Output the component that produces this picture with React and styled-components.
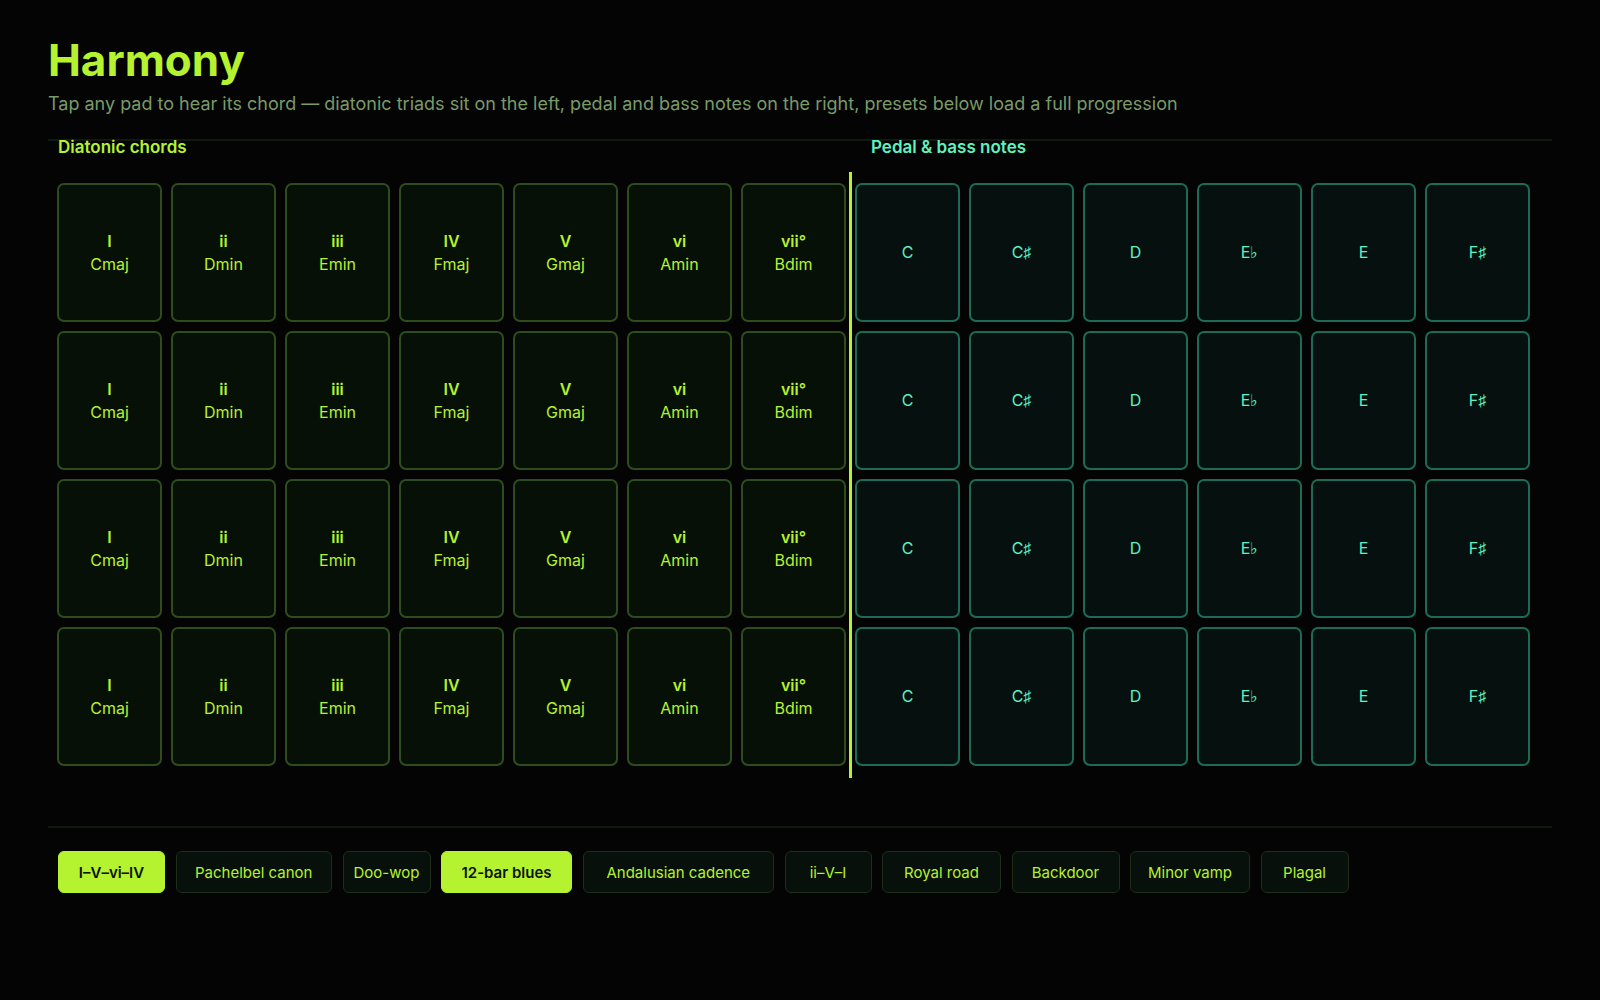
import React from "react";
import styled, { createGlobalStyle } from "styled-components";

const GlobalStyle = createGlobalStyle`
  * { box-sizing: border-box; }
  body {
    margin: 0;
    background: #030403;
    font-family: "Inter", "Noto Sans", sans-serif;
  }
`;

const Page = styled.main`
  width: 1600px;
  min-height: 1000px;
  padding: 36px 48px 0;
`;

const Header = styled.header`
  display: flex;
  flex-direction: column;
  gap: 8px;
  padding-bottom: 23px;
  border-bottom: 2px solid #0d1a0c;
`;

const Title = styled.h1`
  margin: 0;
  font-size: 44px;
  line-height: 48px;
  font-weight: 700;
  color: #b5f22f;
`;

const Subtitle = styled.p`
  margin: 0;
  font-size: 18px;
  line-height: 24px;
  color: #7a9a68;
  white-space: nowrap;
  overflow: hidden;
`;

const Labels = styled.div`
  display: flex;
  margin-top: -6px;
  padding-left: 10px;
`;

const SectionLabel = styled.h2`
  margin: 0;
  width: ${({ $w }) => ($w ? `${$w}px` : "auto")};
  padding-left: ${({ $pad }) => $pad || 0}px;
  font-size: 17px;
  line-height: 24px;
  font-weight: 600;
  color: ${({ $accent }) => $accent};
`;

const Board = styled.section`
  display: flex;
  gap: 3px;
  margin-top: 13px;
  padding-left: 9px;
`;

const Grid = styled.div`
  display: grid;
  grid-template-columns: repeat(${({ $cols }) => $cols}, 105px);
  grid-auto-rows: 139px;
  gap: 9px;
  padding: 11px 0 12px;
`;

const Divider = styled.div`
  width: 3px;
  background: #b5f22f;
`;

const Pad = styled.button`
  display: flex;
  flex-direction: column;
  align-items: center;
  justify-content: center;
  padding: 0 7px;
  overflow: hidden;
  border-radius: 7px;
  border: 2px solid ${({ $tone }) => ($tone === "lime" ? "#2e4c1d" : "#1d6a56")};
  background: ${({ $tone }) => ($tone === "lime" ? "#071007" : "#06110f")};
  color: ${({ $tone }) => ($tone === "lime" ? "#b5f22f" : "#5cf2c2")};
  font-family: inherit;
  font-size: 16px;
  line-height: 23px;
  cursor: pointer;
`;

const PadLine = styled.span`
  white-space: nowrap;
  font-weight: ${({ $strong }) => ($strong ? 600 : 400)};
`;

const Footer = styled.footer`
  margin-top: 48px;
  padding: 23px 0 0 10px;
  border-top: 2px solid #0d1a0c;
`;

const Tabs = styled.nav`
  display: flex;
  gap: 10.5px;
`;

const Tab = styled.button`
  width: ${({ $w }) => $w}px;
  height: 42px;
  padding: 0;
  border-radius: 6px;
  border: 1px solid ${({ $active }) => ($active ? "#b5f22f" : "#1e2e18")};
  background: ${({ $active }) => ($active ? "#b5f22f" : "#07100a")};
  color: ${({ $active }) => ($active ? "#0a1404" : "#b5f22f")};
  font-family: inherit;
  font-size: 15px;
  font-weight: ${({ $active }) => ($active ? 600 : 400)};
  white-space: nowrap;
  cursor: pointer;
`;

const diatonic = [
  ["I", "Cmaj"],
  ["ii", "Dmin"],
  ["iii", "Emin"],
  ["IV", "Fmaj"],
  ["V", "Gmaj"],
  ["vi", "Amin"],
  ["vii°", "Bdim"],
];

const bass = ["C", "C♯", "D", "E♭", "E", "F♯"];

const octaves = [2, 3, 4, 5];

const progressions = [
  { name: "I–V–vi–IV", w: 107, active: true },
  { name: "Pachelbel canon", w: 156.5 },
  { name: "Doo-wop", w: 88 },
  { name: "12-bar blues", w: 131, active: true },
  { name: "Andalusian cadence", w: 191.5 },
  { name: "ii–V–I", w: 87 },
  { name: "Royal road", w: 119 },
  { name: "Backdoor", w: 108 },
  { name: "Minor vamp", w: 120 },
  { name: "Plagal", w: 88 },
];

export default function App() {
  return (
    <>
      <GlobalStyle />
      <Page>
        <Header>
          <Title>Harmony</Title>
          <Subtitle>
            Tap any pad to hear its chord — diatonic triads sit on the left, pedal and bass notes on the right,
            presets below load a full progression
          </Subtitle>
        </Header>

        <Labels>
          <SectionLabel $w={795} $accent="#b5f22f">
            Diatonic chords
          </SectionLabel>
          <SectionLabel $pad={18} $accent="#5cf2c2">
            Pedal &amp; bass notes
          </SectionLabel>
        </Labels>

        <Board>
          <Grid $cols={7}>
            {octaves.map((o) =>
              diatonic.map(([degree, chord]) => (
                <Pad key={`${o}-${degree}`} $tone="lime">
                  <PadLine $strong>{degree}</PadLine>
                  <PadLine>{chord}</PadLine>
                </Pad>
              ))
            )}
          </Grid>
          <Divider />
          <Grid $cols={6}>
            {octaves.map((o) =>
              bass.map((note) => (
                <Pad key={`${o}-${note}`} $tone="teal">
                  <PadLine>{note}</PadLine>
                </Pad>
              ))
            )}
          </Grid>
        </Board>

        <Footer>
          <Tabs>
            {progressions.map((p) => (
              <Tab key={p.name} $w={p.w} $active={p.active}>
                {p.name}
              </Tab>
            ))}
          </Tabs>
        </Footer>
      </Page>
    </>
  );
}
